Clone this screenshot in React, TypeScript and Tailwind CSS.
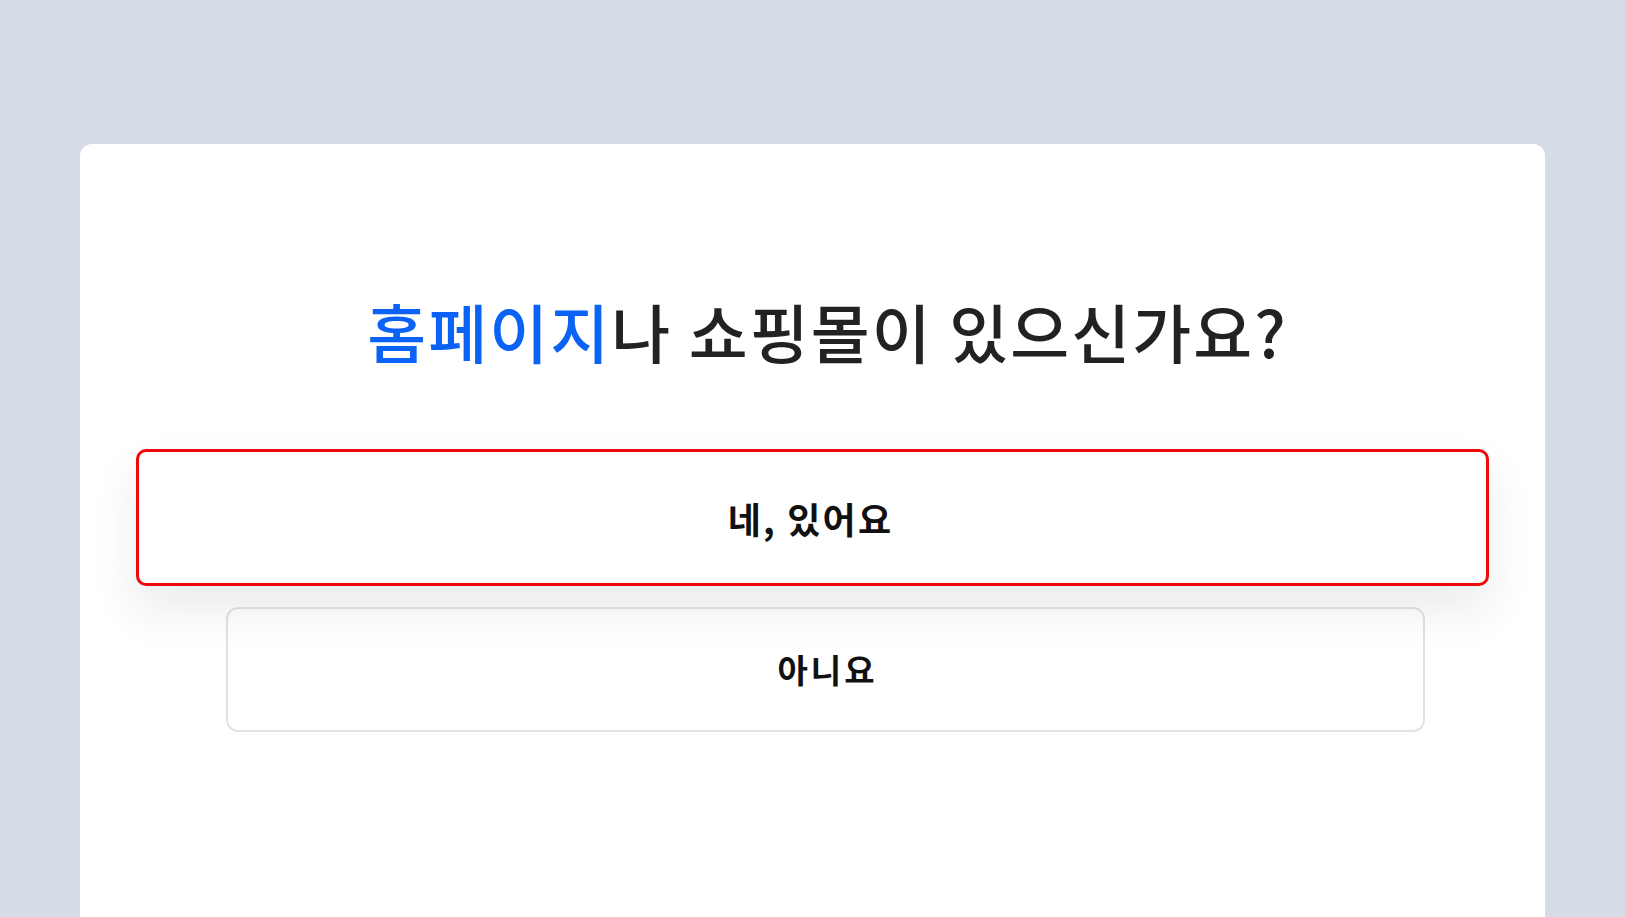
import React from "react";

export default function App() {
  return (
    <div
      className="min-h-screen w-full overflow-hidden bg-[#d6dbe8] px-[80px] pt-[144px]"
      style={{ fontFamily: '"Noto Sans CJK KR", "Noto Sans", sans-serif' }}
    >
      <div className="h-[820px] w-full rounded-t-[12px] bg-white px-[56px] pt-[146px]">
        <h1 className="pl-[30px] text-center text-[64px] font-medium leading-[80px] tracking-[0.033em] text-[#222222]">
          <span className="text-[#0b63f6]">홈페이지</span>나 쇼핑몰이 있으신가요?
        </h1>
        <div className="mt-[79px] flex flex-col">
          <button className="relative z-10 flex h-[137px] w-full items-center justify-center rounded-[10px] border-[3px] border-[#ee0a0a] bg-white text-[36px] font-bold tracking-[0.06em] text-[#111111] shadow-[0_24px_48px_rgba(20,30,50,0.09)]">
            <span className="-translate-x-[2px]">네, 있어요</span>
          </button>
          <div className="mt-[21px] pl-[90px] pr-[64px]">
            <button className="flex h-[125px] w-full items-center justify-center rounded-[12px] border-2 border-[#e3e3e3] bg-transparent text-[33px] font-bold tracking-[0.09em] text-[#111111]">
              <span className="translate-x-[2px]">아니요</span>
            </button>
          </div>
        </div>
      </div>
    </div>
  );
}
